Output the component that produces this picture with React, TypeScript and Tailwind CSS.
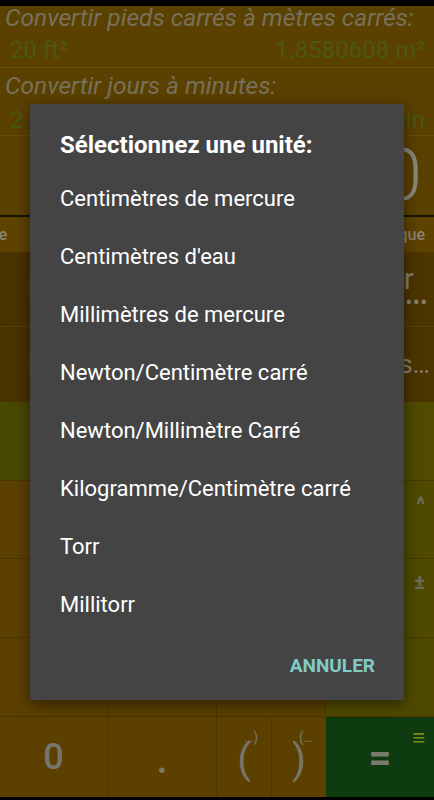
import React from "react";

const items = [
  "Centimètres de mercure",
  "Centimètres d'eau",
  "Millimètres de mercure",
  "Newton/Centimètre carré",
  "Newton/Millimètre Carré",
  "Kilogramme/Centimètre carré",
  "Torr",
  "Millitorr",
];

function Key({ label, sub, className = "" }: { label?: string; sub?: string; className?: string }) {
  return (
    <div className={`relative flex items-center justify-center border-r border-b border-[#4c3500] ${className}`}>
      {label ? <span className="text-[36px] font-medium text-[#78756c]">{label}</span> : null}
      {sub ? (
        <span className="absolute right-[9px] top-[8px] text-[20px] font-bold text-[#6f6c5c]">{sub}</span>
      ) : null}
    </div>
  );
}

export default function App() {
  return (
    <div
      className="relative w-[434px] h-[800px] bg-black flex flex-col overflow-hidden"
      style={{ fontFamily: "Roboto, 'Noto Sans', sans-serif" }}
    >
      <div className="h-[6px] shrink-0 bg-black" />

      {/* history item 1 */}
      <div className="h-[62px] shrink-0 bg-[#5b4100] border-b border-[#684c08] flex flex-col px-[5px]">
        <div className="text-[24.5px] italic text-[#77705c] leading-[26px] mt-[-1px] whitespace-nowrap">
          Convertir pieds carrés à mètres carrés:
        </div>
        <div className="flex justify-between text-[24px] text-[#4b5812] leading-[26px] mt-[6px] pl-[5px] pr-[4px]">
          <span>20 ft²</span>
          <span>1.8580608 m²</span>
        </div>
      </div>

      {/* history item 2 */}
      <div className="h-[68px] shrink-0 bg-[#5b4100] border-b border-[#684c08] flex flex-col px-[5px]">
        <div className="text-[24.5px] italic text-[#77705c] leading-[26px] mt-[5px] whitespace-nowrap">
          Convertir jours à minutes:
        </div>
        <div className="flex justify-between text-[24px] text-[#4b5812] leading-[26px] mt-[8px] pl-[5px] pr-[4px]">
          <span>2 j</span>
          <span>2880 min</span>
        </div>
      </div>

      {/* display */}
      <div className="h-[79px] shrink-0 bg-[#5b4100] flex items-center justify-end pr-[12px]">
        <span className="text-[72px] font-light text-[#8a877c] leading-none">0</span>
      </div>
      <div className="h-[2px] shrink-0 bg-[#17120a]" />

      {/* labels row */}
      <div className="h-[35px] shrink-0 bg-[#5e4300] flex items-center justify-between overflow-hidden pr-[9px]">
        <span className="ml-[-62px] text-[16px] font-medium text-[#8b8472] whitespace-nowrap">Catégorie</span>
        <span className="text-[16px] font-medium text-[#8b8472] whitespace-nowrap">Unité métrique</span>
      </div>

      {/* unit rows */}
      <div className="h-[75px] shrink-0 bg-gradient-to-r from-[#4a3200] to-[#4d3500] border-b border-[#5a4108] flex items-center justify-between pl-[28px] pr-[6px]">
        <span className="text-[28px] font-medium text-[#8a8270]">Pascal</span>
        <div className="flex flex-col items-end leading-none">
          <span className="text-[30px] text-[#878070] leading-[28px] mr-[14px]">Millibar</span>
          <span className="text-[18px] font-bold tracking-[1px] text-[#878070] leading-[20px]">•••</span>
        </div>
      </div>
      <div className="h-[75px] shrink-0 bg-gradient-to-r from-[#4a3200] to-[#4d3500] flex items-center justify-between pl-[28px] pr-[4px]">
        <span className="text-[28px] font-medium text-[#8a8270]">Bar</span>
        <span className="text-[26px] text-[#878070]">Pascals…</span>
      </div>

      {/* olive row */}
      <div className="h-[78px] shrink-0 bg-gradient-to-r from-[#494800] to-[#514b00]" />

      {/* keypad */}
      <div className="h-[237px] shrink-0 grid grid-cols-[108px_109px_109px_108px] grid-rows-3 bg-[#5c4000]">
        <Key className="border-t border-t-[#4c3500]" />
        <Key className="border-t border-t-[#4c3500]" />
        <Key className="border-t border-t-[#4c3500]" />
        <Key className="bg-[#4f4a00] border-t border-t-[#4c3500] border-r-0" sub="^" />
        <Key />
        <Key />
        <Key />
        <Key className="bg-[#4f4a00] border-r-0" sub="±" />
        <Key />
        <Key />
        <Key />
        <Key className="bg-[#4f4a00] border-r-0" />
      </div>

      {/* bottom row */}
      <div className="h-[80px] shrink-0 flex bg-[#5c4000]">
        <div className="w-[108px] flex items-center justify-center border-r border-[#4c3500]">
          <span className="text-[36px] font-medium text-[#78756c]">0</span>
        </div>
        <div className="w-[109px] flex items-center justify-center border-r border-[#4c3500]">
          <span className="text-[36px] font-bold text-[#78756c] mt-[8px]">.</span>
        </div>
        <div className="relative w-[55px] flex items-center justify-center border-r border-[#4c3500]">
          <span className="text-[40px] text-[#78756c] mt-[6px]">(</span>
          <span className="absolute left-[27px] top-[10px] text-[14px] text-[#78756c]">…)</span>
        </div>
        <div className="relative w-[54px] flex items-center justify-center">
          <span className="text-[40px] text-[#78756c] mt-[6px]">)</span>
          <span className="absolute left-[27px] top-[10px] text-[14px] text-[#78756c]">(…</span>
        </div>
        <div className="relative flex-1 bg-[#0e3b0f] flex items-center justify-center">
          <span className="text-[40px] font-bold text-[#7a7a72] mt-[2px]">=</span>
          <span className="absolute right-[9px] top-[10px] text-[22px] font-bold leading-none text-[#7d8a12]">≡</span>
        </div>
      </div>
      <div className="h-[3px] shrink-0 bg-black" />

      {/* dialog overlay */}
      <div className="absolute left-[30px] top-[104px] w-[374px] h-[596px] rounded-[2px] bg-[#444444] shadow-[0_4px_16px_rgba(0,0,0,0.5)] flex flex-col">
        <div className="pt-[24px] pl-[30px] h-[58px] flex items-end">
          <span className="text-[24px] font-bold text-white leading-[34px] whitespace-nowrap">Sélectionnez une unité:</span>
        </div>
        <div className="mt-[7px] flex flex-col">
          {items.map((it) => (
            <div key={it} className="h-[58px] flex items-center pl-[30px] text-[22px] text-white whitespace-nowrap">
              {it}
            </div>
          ))}
        </div>
        <div className="mt-[15px] flex justify-end pr-[29px]">
          <span className="h-[36px] flex items-center text-[19px] font-bold text-[#80cbc4]">ANNULER</span>
        </div>
      </div>
    </div>
  );
}
